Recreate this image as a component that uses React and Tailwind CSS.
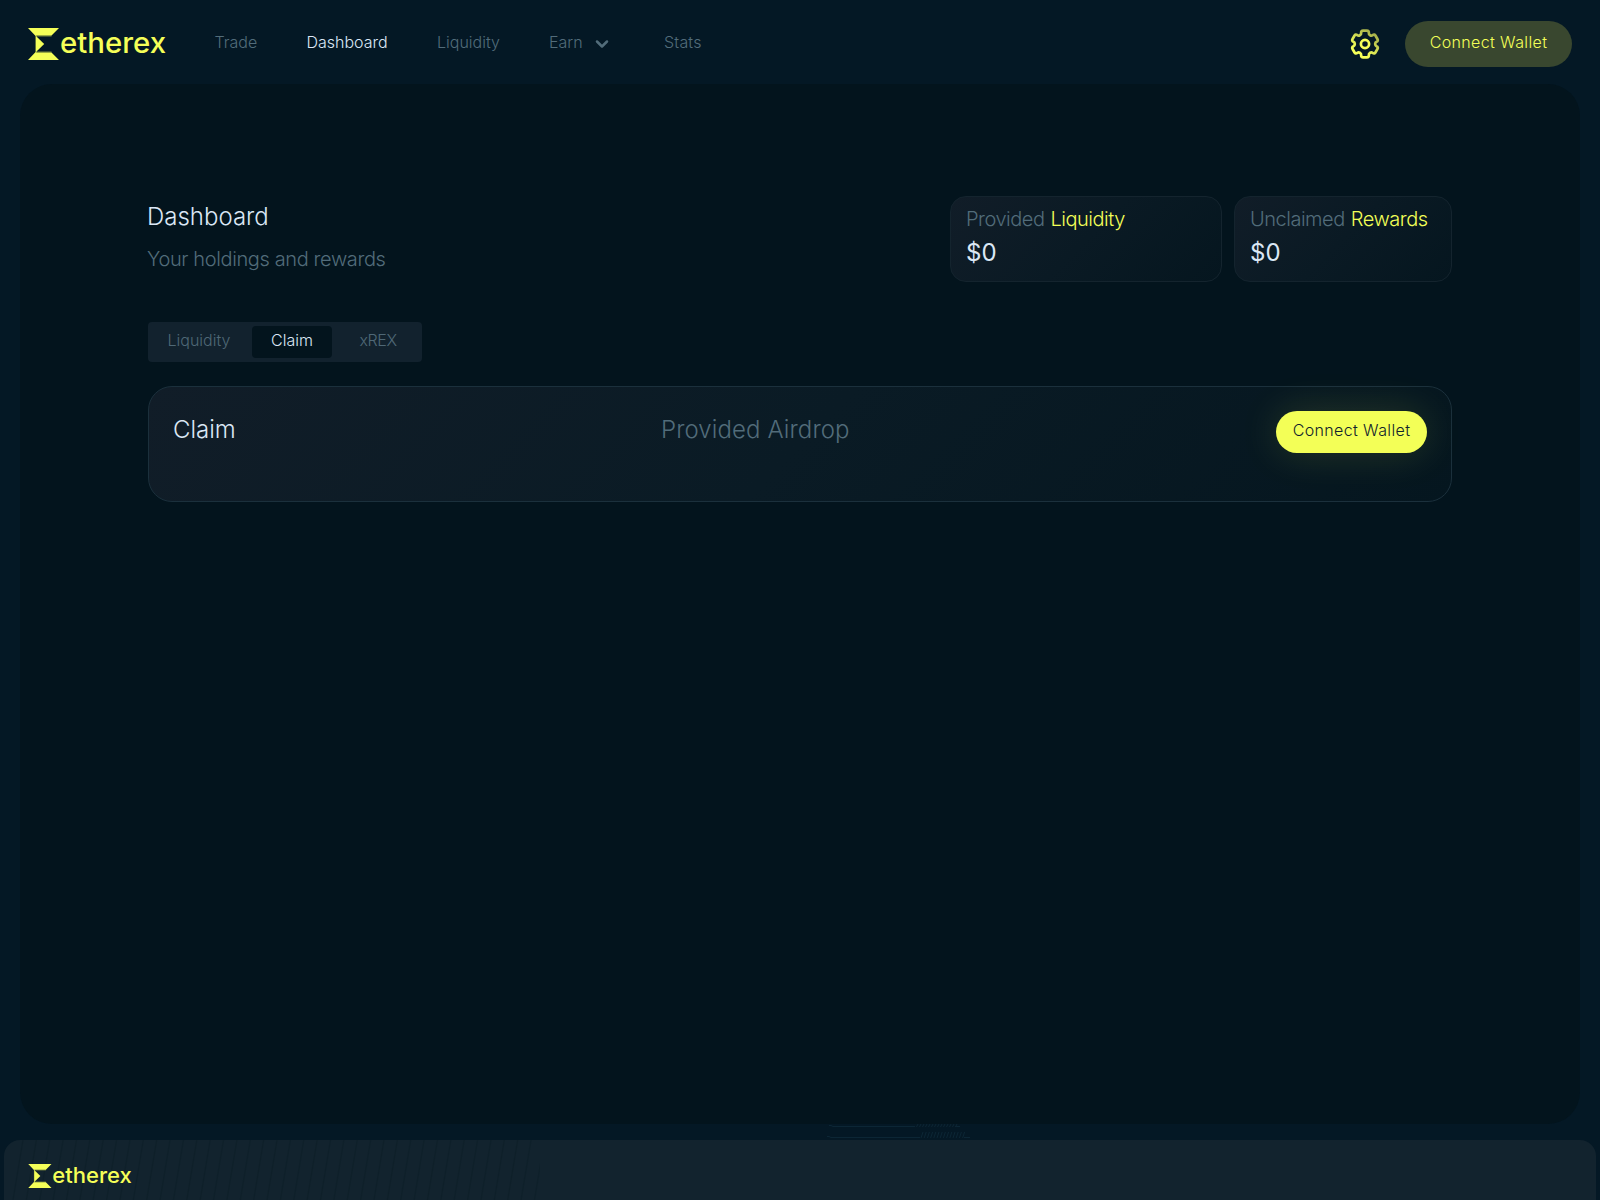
import { ChevronDown } from 'lucide-react';

function Logo({ className }) {
  return (
    <svg viewBox="0 0 138 32" className={'overflow-visible ' + className} fill="#f5ff58" aria-label="etherex">
      <path d="M0 0H31L23.5 7.6H8.2V24.4H23.5L31 32H0L7.6 24V8Z" />
      <path d="M8 8L16.2 16L8 24Z" />
      <path d="M8 8H23.5M8 24H23.5" stroke="#f5ff58" strokeOpacity="0.5" />
      <text
        x="32"
        y="25"
        textLength="106"
        lengthAdjust="spacingAndGlyphs"
        className="font-['Inter',sans-serif] text-[28.5px] font-medium"
      >
        etherex
      </text>
    </svg>
  );
}

const polar = (deg, r) => {
  const a = (deg * Math.PI) / 180;
  return [16 + r * Math.sin(a), 16 - r * Math.cos(a)];
};

const toward = (p, q, d) => {
  const len = Math.hypot(q[0] - p[0], q[1] - p[1]);
  return [p[0] + ((q[0] - p[0]) * d) / len, p[1] + ((q[1] - p[1]) * d) / len];
};

const gearPath = (() => {
  const pts = [];
  for (let k = 0; k < 6; k++) {
    pts.push(polar(k * 60 - 21, 10.3), polar(k * 60 - 17, 13.9), polar(k * 60 + 17, 13.9), polar(k * 60 + 21, 10.3));
  }
  return (
    pts
      .map((p, i) => {
        const cut = i % 4 === 1 || i % 4 === 2 ? 2.2 : 1.5;
        const a = toward(p, pts[(i + pts.length - 1) % pts.length], cut);
        const b = toward(p, pts[(i + 1) % pts.length], cut);
        return `${i ? 'L' : 'M'}${a[0]} ${a[1]}Q${p[0]} ${p[1]} ${b[0]} ${b[1]}`;
      })
      .join('') + 'Z'
  );
})();

function Gear() {
  return (
    <svg className="size-8" viewBox="0 0 32 32" fill="none" stroke="url(#gear)" strokeWidth="2.7">
      <defs>
        <linearGradient id="gear" x1="25" y1="4" x2="11" y2="24" gradientUnits="userSpaceOnUse">
          <stop offset="0" stopColor="#a3ad4b" />
          <stop offset="1" stopColor="#f5ff58" />
        </linearGradient>
      </defs>
      <path d={gearPath} />
      <circle cx="16" cy="16" r="4.1" stroke="#f5ff58" />
    </svg>
  );
}

function StatCard({ label, accent, className }) {
  return (
    <div
      className={
        'h-[86px] rounded-2xl border border-[#14242e] bg-[linear-gradient(135deg,#111d28,#0a1a24_50%,#05161f)] px-[15px] pt-2 ' +
        className
      }
    >
      <div className="flex gap-[6px] text-xl leading-7 tracking-[-0.48px] whitespace-nowrap">
        <span className="text-[#526c7a]">{label}</span>
        <span className="text-[#f3ff57]">{accent}</span>
      </div>
      <div className="mt-[4px] text-2xl leading-8 font-normal text-[#dbe7f5]">$0</div>
    </div>
  );
}

function FooterStripes() {
  return (
    <svg className="absolute left-0 top-0 h-15 w-[536px]" viewBox="0 0 536 60" stroke="#0f202a" strokeWidth="1.2">
      {Array.from({ length: 40 }, (_, i) => (
        <line key={i} x1={19 + i * 13.37} y1="0" x2={9 + i * 13.37} y2="60" />
      ))}
    </svg>
  );
}

function Hatching() {
  return (
    <svg className="absolute left-[826px] top-0 h-4 w-[146px]" viewBox="0 0 146 16" stroke="#0c2635" fill="none">
      <path d="M3 1.5H5L7 2.5H89M129 2.5H134" />
      <path d="M1 12.5H3L5 13.5H94M138 13.5H144" />
      {Array.from({ length: 14 }, (_, i) => (
        <path key={i} d={`M${92 + i * 3} 0L${90.5 + i * 3} 3M${97 + i * 3.2} 8L${95 + i * 3.2} 14`} />
      ))}
    </svg>
  );
}

export default function App() {
  return (
    <div className="flex h-[1200px] w-[1600px] flex-col overflow-hidden bg-[#041825] font-['Inter',sans-serif] font-light">
      <header className="flex h-[84px] shrink-0 items-center pt-1 pr-7 pl-7">
        <Logo className="h-8 w-[138px]" />
        <nav className="flex items-center pb-1 pl-[48.5px] text-base leading-6 whitespace-nowrap text-[#526c7a]">
          <span className="w-[92px]">Trade</span>
          <span className="w-[130.5px] text-[#dbe7f5]">Dashboard</span>
          <span className="w-[112px]">Liquidity</span>
          <span className="flex w-[115px] items-center">
            <span className="w-[43px]">Earn</span>
            <ChevronDown className="mt-1 size-5" strokeWidth={3} />
          </span>
          <span className="tracking-[0.2px]">Stats</span>
        </nav>
        <div className="ml-auto flex items-center gap-6">
          <Gear />
          <button className="h-[46px] w-[167px] rounded-full bg-[#39472f] pb-1 text-base tracking-[0.38px] text-[#f3ff57]">
            Connect Wallet
          </button>
        </div>
      </header>

      <main className="mx-5 h-[1040px] shrink-0 rounded-[32px] bg-[#03141d] px-32 pt-28">
        <div className="flex h-[86px] justify-between">
          <div className="pt-[5px]">
            <h1 className="-ml-px text-2xl leading-8 text-[#dbe7f5]">Dashboard</h1>
            <p className="-ml-px mt-3 text-xl leading-7 tracking-[-0.38px] text-[#526c7a]">Your holdings and rewards</p>
          </div>
          <div className="flex gap-3">
            <StatCard label="Provided" accent="Liquidity" className="w-[272px]" />
            <StatCard label="Unclaimed" accent="Rewards" className="w-[218px]" />
          </div>
        </div>

        <div className="mt-10 flex h-10 w-[274px] items-center rounded bg-[#12222e] p-1 text-base leading-6 text-[#4f6876]">
          <div className="w-[100px] pr-[6px] pb-1 text-center">Liquidity</div>
          <div className="h-8 w-20 rounded bg-[#03141d] pt-0.5 text-center text-[#dbe7f5]">Claim</div>
          <div className="flex-1 pb-1 pl-1.5 text-center tracking-[-0.4px]">xREX</div>
        </div>

        <section className="mt-6 flex h-[116px] rounded-3xl border border-[#1b303c] bg-[linear-gradient(135deg,#111d28,#0a1b25_50%,#05161f)] px-6 pt-6 text-2xl">
          <h2 className="w-[488px] pt-[3px] leading-8 text-[#dbe7f5]">Claim</h2>
          <div className="pt-[3px] leading-8 tracking-[0.1px] text-[#526c7a]">Provided Airdrop</div>
          <button className="ml-auto h-[42px] w-[151px] rounded-full bg-[#f3ff57] pb-1 text-base tracking-[0.38px] text-[#10222c] shadow-[0_0_40px_rgba(243,255,87,0.14)]">
            Connect Wallet
          </button>
        </section>
      </main>

      <div className="relative h-4 shrink-0">
        <Hatching />
      </div>

      <footer className="relative mx-1 h-[60px] shrink-0 overflow-hidden rounded-t-2xl bg-[#12232e] pt-6 pl-6">
        <FooterStripes />
        <Logo className="relative h-6 w-[104px]" />
      </footer>
    </div>
  );
}
